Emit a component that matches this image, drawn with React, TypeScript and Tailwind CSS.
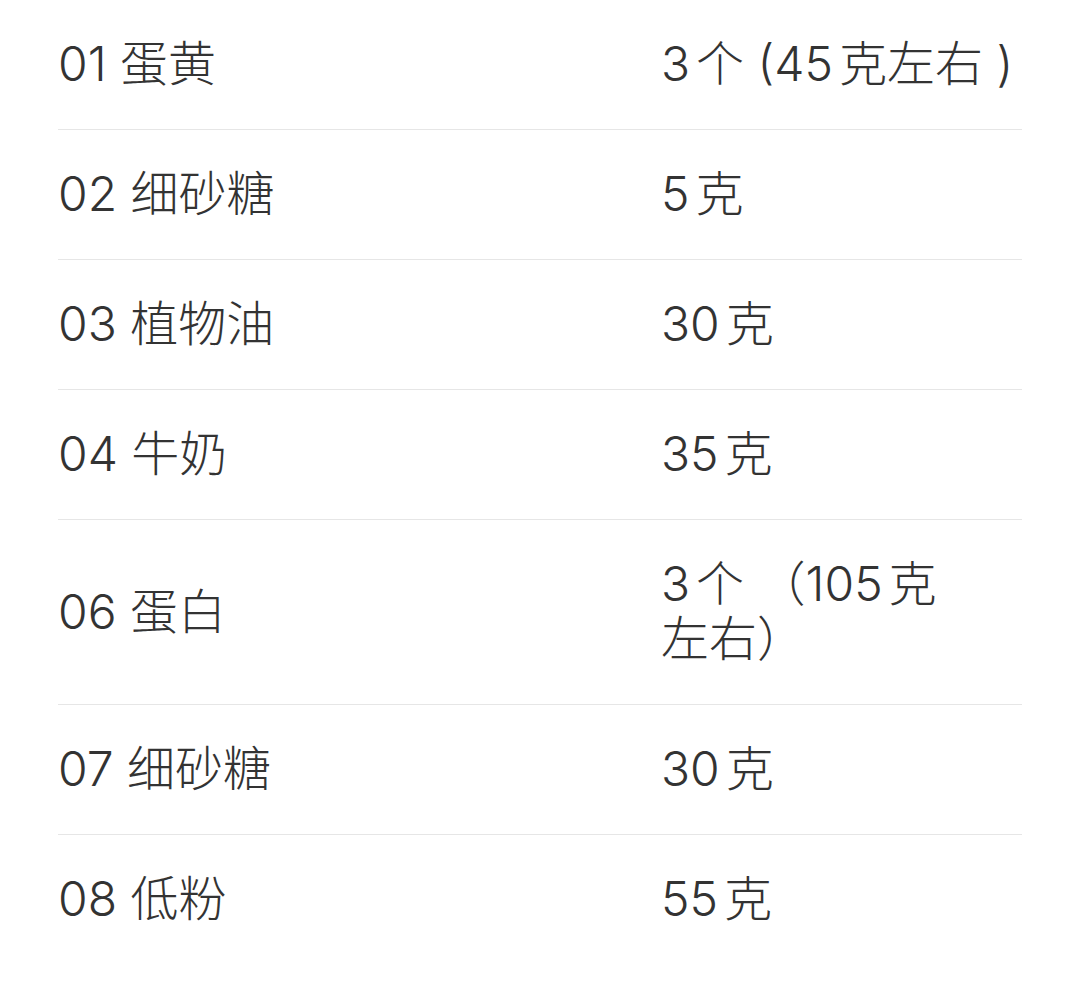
import React from "react";

const rows: { name: string; amount: React.ReactNode }[] = [
  { name: "01 蛋黄", amount: "3个 (45克左右 )" },
  { name: "02 细砂糖", amount: "5克" },
  { name: "03 植物油", amount: "30克" },
  { name: "04 牛奶", amount: "35克" },
  {
    name: "06 蛋白",
    amount: (
      <>
        3个 （105克
        <br />
        左右）
      </>
    ),
  },
  { name: "07 细砂糖", amount: "30克" },
  { name: "08 低粉", amount: "55克" },
];

export default function App() {
  return (
    <div
      className="w-[1080px] h-[994px] bg-white text-[#333333] overflow-hidden font-light [text-autospace:normal]"
      style={{ fontFamily: 'Inter, "Noto Sans CJK SC", sans-serif' }}
    >
      <div className="ml-[58px] w-[964px] flex flex-col">
        {rows.map((r, i) => (
          <div
            key={i}
            className={`grid grid-cols-[603px_1fr] items-center pt-[36px] pb-[38px] text-[48px] leading-[55px] ${
              i < rows.length - 1 ? "border-b border-[#e6e6e6]" : ""
            }`}
          >
            <div>{r.name}</div>
            <div>{r.amount}</div>
          </div>
        ))}
      </div>
    </div>
  );
}
